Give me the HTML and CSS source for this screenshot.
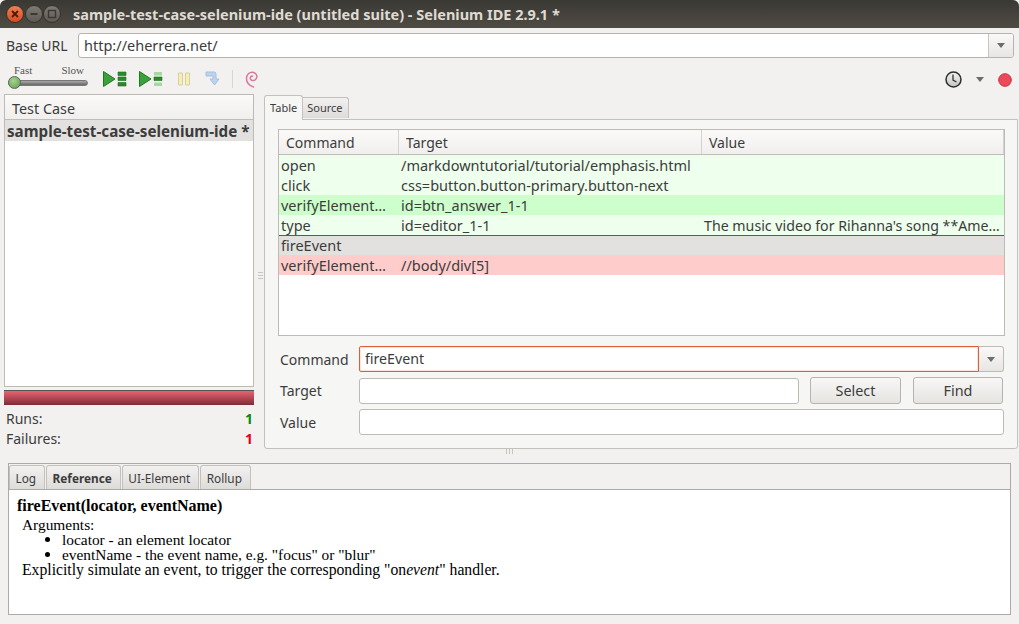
FILE: index.html
```html
<!DOCTYPE html>
<html lang="en">
<head>
<meta charset="utf-8">
<title>Selenium IDE</title>
<link rel="stylesheet" href="styles.css">
</head>
<body>
<div class="window">
  <header class="titlebar">
    <div class="wm">
      <span class="wm-btn wm-close"><svg width="10" height="10" viewBox="0 0 10 10"><path d="M2 2l6 6M8 2l-6 6" stroke="#4a1a08" stroke-width="1.8"/></svg></span>
      <span class="wm-btn"><svg width="10" height="10" viewBox="0 0 10 10"><path d="M1.5 5h7" stroke="#3a3832" stroke-width="2"/></svg></span>
      <span class="wm-btn"><svg width="10" height="10" viewBox="0 0 10 10"><rect x="1.5" y="1.5" width="7" height="7" fill="none" stroke="#3a3832" stroke-width="1.4"/></svg></span>
    </div>
    <div class="title">sample-test-case-selenium-ide (untitled suite) - Selenium IDE 2.9.1 *</div>
  </header>

  <div class="urlrow">
    <label class="urllabel">Base URL</label>
    <div class="combo urlcombo">
      <div class="combo-text">http://eherrera.net/</div>
      <div class="combo-drop"><span class="arrow"></span></div>
    </div>
  </div>

  <div class="toolbar">
    <div class="speed">
      <div class="speed-labels"><span>Fast</span><span>Slow</span></div>
      <div class="track"><span class="thumb"></span></div>
    </div>
    <div class="tools">
      <svg class="tool t1" width="24" height="16" viewBox="0 0 24 16"><path d="M0.5 0.5L12 8L0.5 15.5Z" fill="#3ca03c" stroke="#1d7a1d"/><path d="M15 1h8v3.5h-8zM15 6h8v3.5h-8zM15 11.5h8v3.5h-8z" fill="#2a8a2a" stroke="#1d6f1d" stroke-width=".6"/></svg>
      <svg class="tool t2" width="24" height="16" viewBox="0 0 24 16"><path d="M0.5 0.5L12 8L0.5 15.5Z" fill="#3ca03c" stroke="#1d7a1d"/><path d="M15 1h8v3.5h-8zM15 11.5h8v3.5h-8z" fill="#a8d8a0"/><path d="M15 6h8v3.5h-8z" fill="#2a8a2a" stroke="#1d6f1d" stroke-width=".6"/></svg>
      <svg class="tool t3" width="14" height="14" viewBox="0 0 14 14"><path d="M1.5 1h4v12h-4zM8.5 1h4v12h-4z" fill="#f5eeb0" stroke="#d6d0a0"/></svg>
      <svg class="tool t4" width="16" height="16" viewBox="0 0 16 16"><path d="M1 1h8q2 0 2 2v5h3l-4.5 6L5 8h3V5H1z" fill="#bcd4ee" stroke="#a4c0de"/></svg>
      <span class="sep"></span>
      <svg class="tool" width="13" height="17" viewBox="0 0 13 17"><path d="M8.500 16C4 14.500 1.500 11 1.500 7.500 1.500 3.500 4.500 1 7.500 1.200 10.500 1.500 12.200 3.800 11.800 6.200 11.400 8.600 9.300 10 7.300 9.500 5.800 9.100 5 7.800 5.400 6.500 5.700 5.500 6.700 5 7.600 5.200" fill="none" stroke="#d9799c" stroke-width="1.500" stroke-linecap="round"/></svg>
    </div>
    <div class="tools-right">
      <svg class="clock" width="17" height="17" viewBox="0 0 17 17"><defs><linearGradient id="cg" x1="0" y1="0" x2="0" y2="1"><stop offset="0" stop-color="#f4f4f2"/><stop offset="1" stop-color="#c4c4c0"/></linearGradient></defs><circle cx="8.500" cy="8.500" r="7.500" fill="url(#cg)" stroke="#2e2e2e" stroke-width="1.500"/><path d="M8 3.500V9L11.500 11" fill="none" stroke="#333" stroke-width="1.300"/></svg>
      <span class="arrow"></span>
      <svg class="rec" width="14" height="14" viewBox="0 0 14 14"><circle cx="7" cy="7" r="6.300" fill="#ec4a58" stroke="#c43040"/></svg>
    </div>
  </div>

  <main class="main">
    <aside class="left">
      <div class="listbox">
        <div class="listhead">Test Case</div>
        <div class="listitem">sample-test-case-selenium-ide *</div>
      </div>
      <div class="progress"></div>
      <div class="stat"><span>Runs:</span><b class="pass">1</b></div>
      <div class="stat"><span>Failures:</span><b class="fail">1</b></div>
    </aside>
    <div class="vgrip"><span class="vgrip-lines"></span></div>
    <section class="right">
      <div class="tabs">
        <span class="tab tab-on">Table</span>
        <span class="tab">Source</span>
      </div>
      <div class="panel">
        <div class="grid">
          <div class="row head"><span>Command</span><span>Target</span><span>Value</span></div>
          <div class="row ok"><span>open</span><span>/markdowntutorial/tutorial/emphasis.html</span><span></span></div>
          <div class="row ok"><span>click</span><span>css=button.button-primary.button-next</span><span></span></div>
          <div class="row good"><span>verifyElement…</span><span>id=btn_answer_1-1</span><span></span></div>
          <div class="row ok cursor"><span>type</span><span>id=editor_1-1</span><span class="long">The music video for Rihanna's song **Ame…</span></div>
          <div class="row sel"><span>fireEvent</span><span></span><span></span></div>
          <div class="row bad"><span>verifyElement…</span><span>//body/div[5]</span><span></span></div>
        </div>
        <div class="form">
          <label>Command</label>
          <div class="combo cmdcombo"><div class="combo-text">fireEvent</div><div class="combo-drop"><span class="arrow"></span></div></div>
          <label>Target</label>
          <div class="targetrow"><div class="field"></div><button class="btn">Select</button><button class="btn">Find</button></div>
          <label>Value</label>
          <div class="field valuefield"></div>
        </div>
      </div>
    </section>
  </main>
  <div class="hgrip"><span class="hgrip-lines"></span></div>

  <section class="bottom">
    <div class="btabs">
      <span class="btab">Log</span>
      <span class="btab btab-on">Reference</span>
      <span class="btab">UI-Element</span>
      <span class="btab">Rollup</span>
    </div>
    <div class="ref">
      <div class="refhead">fireEvent(locator, eventName)</div>
      <div class="refbody">
        <div>Arguments:</div>
        <ul>
          <li>locator - an element locator</li>
          <li>eventName - the event name, e.g. "focus" or "blur"</li>
        </ul>
        <div class="expl">Explicitly simulate an event, to trigger the corresponding "on<i>event</i>" handler.</div>
      </div>
    </div>
  </section>
</div>
</body>
</html>
```
FILE: styles.css
```css
* { box-sizing: border-box; }
html, body { margin: 0; padding: 0; }
body { background: #f2f1f0; overflow: hidden; font-family: "Noto Sans", sans-serif; font-size: 14px; color: #3c3c3c; }
.window { width: 1019px; height: 624px; display: flex; flex-direction: column; background: #f2f1f0; }

.titlebar { height: 28px; display: flex; align-items: center; background: linear-gradient(#3a3833, #4f4c45); border-top-left-radius: 6px; border-top-right-radius: 6px; flex: none; }
.wm { display: flex; gap: 0.5px; padding-left: 6px; width: 73px; }
.wm-btn { width: 18px; height: 18px; border-radius: 50%; background: linear-gradient(#7d7a72, #5c5a53); border: 1px solid #35332e; display: flex; align-items: center; justify-content: center; }
.wm-close { background: linear-gradient(#f08050, #d84a20); }
.title { color: #dfdbd2; font-weight: 700; font-size: 14.5px; white-space: nowrap; }

.urlrow { height: 36px; display: flex; align-items: flex-start; padding: 5px 5px 0 6px; flex: none; }
.urllabel { width: 72px; line-height: 25px; }
.combo { display: flex; border: 1px solid #b6b3ae; border-radius: 3px; background: #fff; }
.urlcombo { flex: 1; height: 25px; }
.combo-text { flex: 1; padding-left: 5px; line-height: 23px; font-size: 14.5px; }
.combo-drop { width: 25px; border-left: 1px solid #c8c6c2; background: linear-gradient(#faf9f8, #e8e6e3); display: flex; align-items: center; justify-content: center; border-radius: 0 2px 2px 0; }
.arrow { display: inline-block; width: 0; height: 0; border-left: 4px solid transparent; border-right: 4px solid transparent; border-top: 5px solid #6d6d6d; }

.toolbar { height: 30px; display: flex; align-items: center; padding: 0 7px 0 8px; flex: none; }
.speed { width: 80px; height: 24px; display: flex; flex-direction: column; margin-right: 1px; }
.speed-labels { display: flex; justify-content: space-between; font-family: "Liberation Serif", serif; font-size: 11px; line-height: 11px; margin-top: -2px; padding: 0 4px 0 6px; color: #555; }
.track { position: relative; height: 6px; margin-top: 4px; background: linear-gradient(#aaa, #666); border: 1px solid #777; border-radius: 3px; }
.thumb { position: absolute; left: -1px; top: -5px; width: 13px; height: 13px; border-radius: 50%; background: radial-gradient(circle at 40% 35%, #a6d490, #5f9a50); border: 1px solid #5a6a55; }
.tools { display: flex; align-items: center; margin-left: 14px; flex: 1; }
.tool { display: block; flex: none; }
.t1 { margin-right: 12px; }
.t2 { margin-right: 14px; }
.t3 { margin-right: 14px; }
.t4 { margin-right: 11px; }
.sep { width: 1px; height: 18px; background: #d8d6d2; margin: 0 12px 0 0; }
.tools-right { display: flex; align-items: center; gap: 14px; padding-top: 1px; }

.main { height: 354px; display: flex; padding-left: 4px; flex: none; }
.left { width: 250px; display: flex; flex-direction: column; }
.listbox { height: 293px; border: 1px solid #bebbb6; background: #fff; flex: none; }
.listhead { height: 25px; line-height: 27px; padding-left: 7px; border-bottom: 1px solid #c0bdb8; background: linear-gradient(#fbfaf9, #f0efed); font-size: 14.4px; }
.listitem { height: 21px; line-height: 22px; padding-left: 2px; background: #e2e1df; font-weight: 700; white-space: nowrap; font-size: 15.2px; }
.progress { height: 15px; margin: 3px 0 3px; background: linear-gradient(#e9646f, #7d2c38); border-top: 1px solid #555; flex: none; }
.stat { height: 20px; display: flex; justify-content: space-between; align-items: center; padding: 0 1px 0 2px; }
.pass { color: #0a8a0a; }
.fail { color: #e0001a; }
.vgrip { width: 10px; display: flex; align-items: center; justify-content: flex-end; padding: 8px 1px 0 0; }
.vgrip-lines { width: 5px; height: 7px; background: repeating-linear-gradient(#c8c6c2 0 1px, transparent 1px 3px); }

.right { width: 754px; display: flex; flex-direction: column; }
.tabs { height: 25px; display: flex; align-items: flex-end; flex: none; }
.tab { height: 21px; padding: 0 5px 0 4px; line-height: 20px; font-size: 11px; background: linear-gradient(#f2f1f0, #dedcd9); border: 1px solid #c4c1bc; border-bottom: 0; border-left: 0; border-radius: 0 3px 0 0; margin-bottom: 1px; }
.tab-on { height: 25px; padding: 0 5px; line-height: 24px; background: #f6f6f5; border-left: 1px solid #c4c1bc; border-radius: 3px 3px 0 0; margin-bottom: -1px; z-index: 1; position: relative; }
.panel { height: 330px; background: #f6f6f5; border: 1px solid #c4c1bc; border-radius: 0 0 3px 3px; padding: 9px 13px 0 13px; flex: none; }
.grid { height: 207px; width: 727px; border: 1px solid #bebbb6; background: #fff; font-size: 14.5px; }
.row { display: grid; grid-template-columns: 120px 303px 1fr; height: 20px; line-height: 21px; white-space: nowrap; }
.row span { padding-left: 2px; overflow: hidden; }
.row .long { font-size: 14.2px; }
.head { height: 25px; line-height: 26px; background: linear-gradient(#fbfaf9, #f0efed); border-bottom: 1px solid #c0bdb8; font-size: 14px; }
.row.head span { padding-left: 7px; border-right: 1px solid #d4d2ce; }
.ok { background: #eeffee; }
.good { background: #ccffcc; }
.sel { background: #e2e1df; height: 19px; line-height: 19px; }
.bad { background: #ffcccc; }
.cursor { height: 21px; border-bottom: 1px solid #009a00; }

.form { display: grid; grid-template-columns: 81px 645px; margin-top: 10px; align-items: center; row-gap: 5px; }
.form label { padding-left: 2px; }
.cmdcombo { height: 26px; border-radius: 2px; background: transparent; border: 0; }
.cmdcombo .combo-text { border: 1px solid #d9603a; background: #fff; border-radius: 2px 0 0 2px; line-height: 24px; box-shadow: inset 0 0 0 1px #fbe3d8; font-size: 14.2px; }
.cmdcombo .combo-drop { border: 1px solid #bebbb6; border-left: 0; border-radius: 0 3px 3px 0; }
.targetrow { display: flex; align-items: center; }
.field { height: 26px; border: 1px solid #bebbb6; border-radius: 3px; background: #fff; }
.targetrow .field { width: 440px; margin-right: 11px; }
.btn { width: 91px; height: 27px; font: inherit; font-size: 14.4px; color: inherit; border: 1px solid #b6b3ae; border-radius: 3px; background: linear-gradient(#f8f7f6, #e6e4e1); padding: 0; margin-right: 12px; }
.btn:last-child { margin-right: 0; width: 90px; }
.valuefield { width: 645px; }

.hgrip { height: 15px; flex: none; display: flex; justify-content: center; padding-top: 1px; }
.hgrip-lines { width: 8px; height: 5px; background: repeating-linear-gradient(90deg, #c8c6c2 0 1px, transparent 1px 3px); }
.bottom { margin: 0 8px; height: 152px; display: flex; flex-direction: column; flex: none; }
.btabs { height: 26px; display: flex; gap: 1px; padding: 1px 0 0 0; border: 1px solid #aaa; border-bottom: 0; flex: none; }
.btab { padding: 0 8px 0 5.5px; line-height: 24px; font-size: 11.8px; background: linear-gradient(#f2f1f0, #dedcd9); border: 1px solid #c4c1bc; border-bottom: 0; border-radius: 3px 3px 0 0; }
.btab-on { font-weight: 700; }
.ref { height: 127px; border: 1px solid #aaa; background: #fff; font-family: "Liberation Serif", serif; font-size: 15.4px; color: #000; padding: 7px 8px; line-height: 15px; }
.refhead { font-weight: 700; font-size: 16px; line-height: 17px; margin-bottom: 3px; }
.refbody { padding-left: 5px; }
.refbody ul { margin: 0; padding-left: 40px; }
.refbody li::marker { font-size: 17px; }
.expl { font-size: 15.7px; }
```
